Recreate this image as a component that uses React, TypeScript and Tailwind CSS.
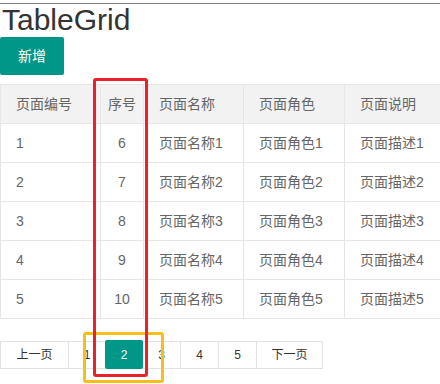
const rows = [1, 2, 3, 4, 5].map(i => ({
  id: i,
  seq: i + 5,
  name: `页面名称${i}`,
  role: `页面角色${i}`,
  desc: `页面描述${i}`,
}));

const pages = [
  { label: '上一页', w: 'w-[69px]' },
  { label: '1', w: 'w-[38px]' },
  { label: '2', w: 'w-[38px]', active: true },
  { label: '3', w: 'w-[39px]' },
  { label: '4', w: 'w-[39px]' },
  { label: '5', w: 'w-[39px]' },
  { label: '下一页', w: 'w-[67px]' },
];

export default function App() {
  return (
    <div
      className="relative w-[440px] h-[384px] overflow-hidden bg-white pt-[3px] text-[#333]"
      style={{ fontFamily: '"Liberation Sans", "Noto Sans CJK SC", sans-serif' }}
    >
      <div className="border-t border-[#808080]">
        {/* Title */}
        <h1 className="pl-[2px] text-[30px] leading-[31px] text-[#333]">TableGrid</h1>

        {/* Add button */}
        <button className="mt-[2px] h-[38px] w-[64px] rounded-[2px] bg-[#009688] text-[14px] text-white">
          新增
        </button>

        {/* Table */}
        <div className="mt-[9px] w-[440px] overflow-hidden">
          <table className="w-[445px] table-fixed border-collapse text-[14px] text-[#666]">
            <colgroup>
              <col className="w-[100px]" />
              <col className="w-[43px]" />
              <col className="w-[100px]" />
              <col className="w-[101px]" />
              <col className="w-[101px]" />
            </colgroup>
            <thead>
              <tr className="bg-[#f2f2f2]">
                <th className="border border-[#e6e6e6] px-[15px] py-[9px] text-left font-normal leading-[20px]">页面编号</th>
                <th className="border border-[#e6e6e6] py-[9px] text-center font-normal leading-[20px]">序号</th>
                <th className="border border-[#e6e6e6] px-[15px] py-[9px] text-left font-normal leading-[20px]">页面名称</th>
                <th className="border border-[#e6e6e6] px-[15px] py-[9px] text-left font-normal leading-[20px]">页面角色</th>
                <th className="border border-[#e6e6e6] px-[15px] py-[9px] text-left font-normal leading-[20px] whitespace-nowrap">页面说明</th>
              </tr>
            </thead>
            <tbody>
              {rows.map(r => (
                <tr key={r.id}>
                  <td className="border border-[#e6e6e6] px-[15px] py-[9px] leading-[20px]">{r.id}</td>
                  <td className="border border-[#e6e6e6] py-[9px] text-center leading-[20px]">{r.seq}</td>
                  <td className="border border-[#e6e6e6] px-[15px] py-[9px] leading-[20px] whitespace-nowrap">{r.name}</td>
                  <td className="border border-[#e6e6e6] px-[15px] py-[9px] leading-[20px] whitespace-nowrap">{r.role}</td>
                  <td className="border border-[#e6e6e6] px-[15px] py-[9px] leading-[20px] whitespace-nowrap">{r.desc}</td>
                </tr>
              ))}
            </tbody>
          </table>
        </div>

        {/* Pagination */}
        <div className="mt-[22px] flex">
          {pages.map(p => (
            <span
              key={p.label}
              className={
                p.active
                  ? `${p.w} -mr-px flex h-[29px] -mt-px items-center justify-center rounded-[2px] bg-[#009688] text-[12px] text-white relative z-10`
                  : `${p.w} -mr-px flex h-[28px] items-center justify-center border border-[#e2e2e2] bg-white text-[12px] text-[#333]`
              }
            >
              {p.label}
            </span>
          ))}
        </div>
      </div>

      {/* Annotation boxes */}
      <div className="absolute left-[83px] top-[332px] h-[51px] w-[81px] rounded-[3px] border-[3px] border-[#f5be1c]" />
      <div className="absolute left-[93px] top-[78px] h-[299px] w-[55px] rounded-[3px] border-[3px] border-[#e8222a]" />
    </div>
  );
}
